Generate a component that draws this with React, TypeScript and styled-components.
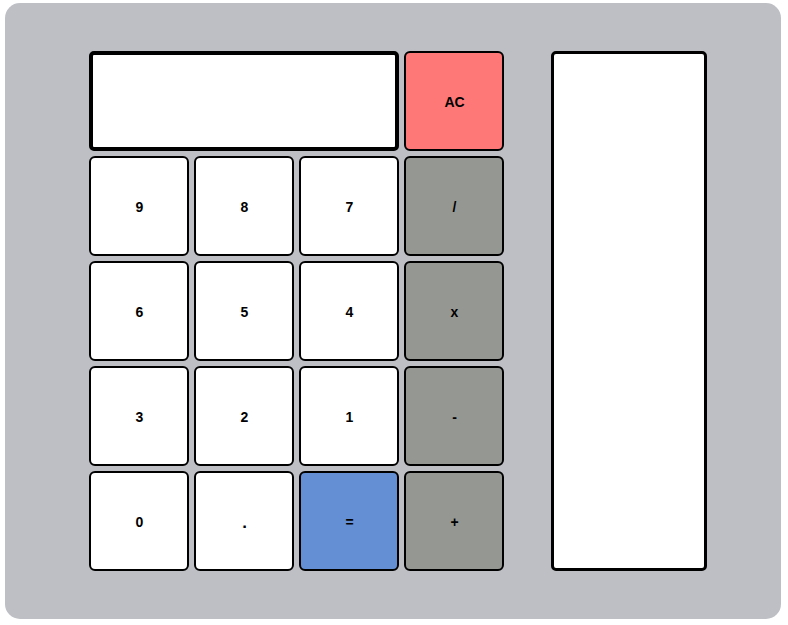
import React, { FC } from "react";
import styled, { createGlobalStyle } from "styled-components";

const GlobalStyle = createGlobalStyle`
  body {
    margin: 0;
    background: #ffffff;
    font-family: "Liberation Sans", Arial, sans-serif;
  }
`;

const Frame = styled.div`
  box-sizing: border-box;
  width: 776px;
  height: 616px;
  margin: 3px 0 0 5px;
  padding: 48px 0 0 84px;
  background-color: #bebfc4;
  border-radius: 15px;
  display: flex;
  align-items: flex-start;
  gap: 47px;
`;

const Keypad = styled.div`
  display: grid;
  grid-template-columns: repeat(4, 100px);
  grid-auto-rows: 100px;
  gap: 5px;
`;

const Display = styled.div`
  box-sizing: border-box;
  grid-column: span 3;
  background-color: #ffffff;
  border: 4px solid #000000;
  border-radius: 5px;
`;

type Tone = "digit" | "op" | "clear" | "equals";

const toneColor: Record<Tone, string> = {
  digit: "#ffffff",
  op: "#959793",
  clear: "#ff7878",
  equals: "#648fd4",
};

const Key = styled.button<{ $tone: Tone; $big?: boolean }>`
  box-sizing: border-box;
  width: 100px;
  height: 100px;
  margin: 0;
  padding: ${(p) => (p.$big ? "4px 0 0 1px" : "2px 0 0 1px")};
  display: flex;
  align-items: center;
  justify-content: center;
  background-color: ${(p) => toneColor[p.$tone]};
  border: 2px solid #000000;
  border-radius: 6px;
  font-family: "Liberation Sans", Arial, sans-serif;
  font-size: ${(p) => (p.$big ? "17px" : "14px")};
  font-weight: bold;
  color: #000000;
  cursor: pointer;
`;

const History = styled.div`
  box-sizing: border-box;
  width: 156px;
  height: 520px;
  background-color: #ffffff;
  border: 3px solid #000000;
  border-radius: 5px;
`;

const keys: { label: string; tone: Tone }[] = [
  { label: "9", tone: "digit" },
  { label: "8", tone: "digit" },
  { label: "7", tone: "digit" },
  { label: "/", tone: "op" },
  { label: "6", tone: "digit" },
  { label: "5", tone: "digit" },
  { label: "4", tone: "digit" },
  { label: "x", tone: "op" },
  { label: "3", tone: "digit" },
  { label: "2", tone: "digit" },
  { label: "1", tone: "digit" },
  { label: "-", tone: "op" },
  { label: "0", tone: "digit" },
  { label: ".", tone: "digit" },
  { label: "=", tone: "equals" },
  { label: "+", tone: "op" },
];

const App: FC = () => {
  return (
    <>
      <GlobalStyle />
      <Frame>
        <Keypad>
          <Display />
          <Key $tone="clear">AC</Key>
          {keys.map((k) => (
            <Key key={k.label} $tone={k.tone} $big={k.label === "."}>
              {k.label}
            </Key>
          ))}
        </Keypad>
        <History />
      </Frame>
    </>
  );
};

export default App;
